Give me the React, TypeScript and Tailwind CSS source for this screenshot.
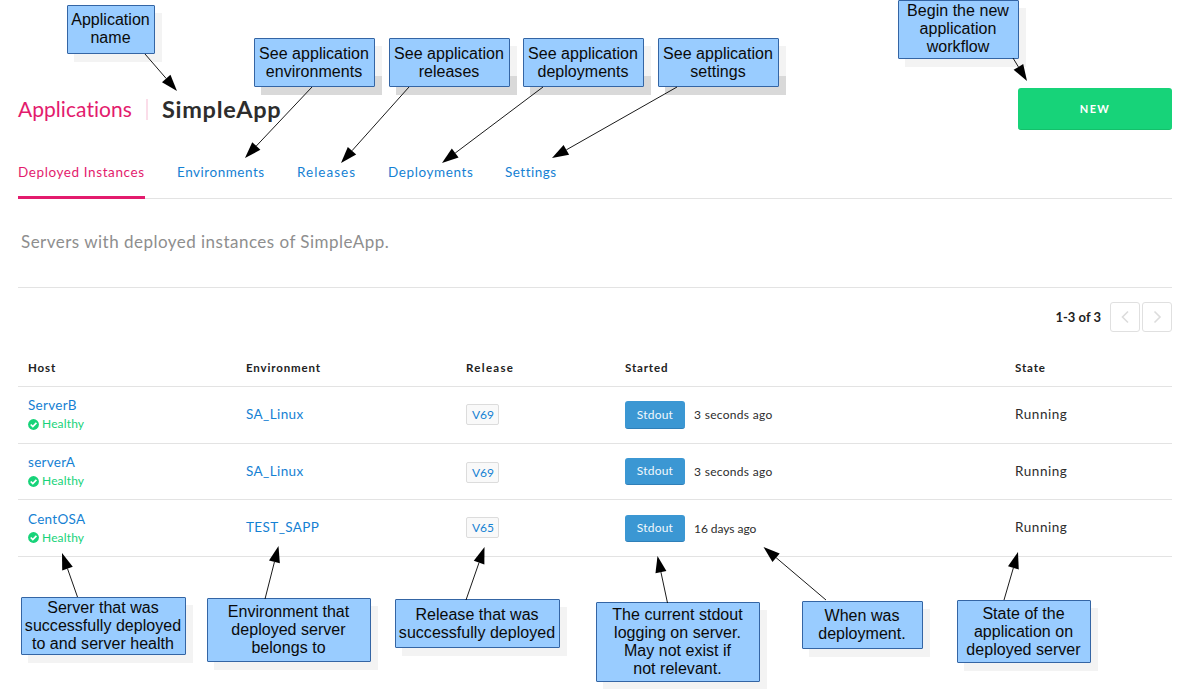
import React from "react";
import clsx from "clsx";

type Note = { box: string; lines: string[]; dark?: boolean };

const notes: Note[] = [
  { box: "left-[67px] top-[5px] w-[88px] h-[49px] [&>p]:pb-[2px]", lines: ["Application", "name"] },
  { box: "left-[254px] top-[38px] w-[121px] h-[49px]", lines: ["See application", "environments"], dark: true },
  { box: "left-[389px] top-[38px] w-[121px] h-[49px]", lines: ["See application", "releases"], dark: true },
  { box: "left-[523px] top-[38px] w-[121px] h-[49px]", lines: ["See application", "deployments"], dark: true },
  { box: "left-[658px] top-[38px] w-[121px] h-[49px]", lines: ["See application", "settings"], dark: true },
  { box: "left-[898px] top-0 w-[121px] h-[59px] [&>p]:pb-[2px]", lines: ["Begin the new", "application", "workflow"] },
  { box: "left-[21px] top-[597px] w-[165px] h-[58px]", lines: ["Server that was", "successfully deployed", "to and server health"] },
  { box: "left-[207px] top-[598px] w-[164px] h-[64px]", lines: ["Environment that", "deployed server", "belongs to"] },
  { box: "left-[395px] top-[599px] w-[165px] h-[49px]", lines: ["Release that was", "successfully deployed"] },
  { box: "left-[596px] top-[602px] w-[164px] h-[80px]", lines: ["The current stdout", "logging on server.", "May not exist if", "not relevant."] },
  { box: "left-[802px] top-[601px] w-[121px] h-[48px]", lines: ["When was", "deployment."] },
  { box: "left-[957px] top-[600px] w-[134px] h-[63px]", lines: ["State of the", "application on", "deployed server"] },
];

const arrows: [number, number, number, number][] = [
  [145, 54, 177, 91],
  [312, 87, 245, 158],
  [409, 87, 341, 163],
  [543, 87, 442, 163],
  [677, 87, 552, 158],
  [1013, 58, 1027, 81],
  [77.5, 597, 62, 553],
  [265, 599, 278.5, 546],
  [466, 600, 484.5, 547],
  [667.5, 603, 657.5, 556],
  [826, 600, 763.5, 547],
  [1004, 600, 1018, 552],
];

function Arrow({ points: [x1, y1, x2, y2] }: { points: [number, number, number, number] }) {
  const len = Math.hypot(x2 - x1, y2 - y1);
  const ux = (x2 - x1) / len;
  const uy = (y2 - y1) / len;
  const bx = x2 - ux * 16.5;
  const by = y2 - uy * 16.5;
  const w = 5.6;
  return (
    <g>
      <line x1={x1} y1={y1} x2={bx} y2={by} stroke="#000" strokeWidth="0.9" />
      <polygon points={`${x2},${y2} ${bx - uy * w},${by + ux * w} ${bx + uy * w},${by - ux * w}`} />
    </g>
  );
}

function Annotations() {
  return (
    <div className="pointer-events-none absolute inset-0">
      {notes.map((n, i) => (
        <div key={i} className={clsx("absolute", n.box)}>
          <div
            className={clsx(
              "absolute top-2 left-[7px] h-full w-full",
              n.dark ? "bg-[linear-gradient(#f3f3f3_30px,#d9d9d9_30px)]" : "bg-[#f3f3f3]",
            )}
          />
          <p className="relative flex h-full w-full flex-col items-center justify-center rounded-[1px] border border-[#3465a4] bg-[#99ccff] pr-[1px] font-['Liberation_Sans',Arial,sans-serif] text-[16px] leading-[18px] tracking-[0.03px] whitespace-nowrap text-[#0a0a0a]">
            {n.lines.map((l) => (
              <span key={l}>{l}</span>
            ))}
          </p>
        </div>
      ))}
      <svg className="absolute inset-0" width="1187" height="689" viewBox="0 0 1187 689">
        {arrows.map((a, i) => (
          <Arrow key={i} points={a} />
        ))}
      </svg>
    </div>
  );
}

const rows = [
  { host: "ServerB", env: "SA_Linux", rel: "V69", started: "3 seconds ago", h: "h-[57px]", hostPad: "pb-px", cell: "pb-[2px]", badge: "pb-px", btn: "h-[28px]", ago: "tracking-[0.3px]" },
  { host: "serverA", env: "SA_Linux", rel: "V69", started: "3 seconds ago", h: "h-[56px]", hostPad: "", cell: "", badge: "pt-px", btn: "h-[27px]", ago: "tracking-[0.3px]" },
  { host: "CentOSA", env: "TEST_SAPP", rel: "V65", started: "16 days ago", h: "h-[57px]", hostPad: "", cell: "pb-[2px]", badge: "pb-px", btn: "mt-px h-[27px]", ago: "pt-[2px] tracking-[-0.05px]" },
];

const cols = "grid grid-cols-[218px_220px_159px_390px_1fr] pl-[10px] border-b border-[#e3e3e3]";

function Chevron({ d }: { d: string }) {
  return (
    <button className="flex h-[30px] w-[30px] items-center justify-center rounded-[3px] border border-[#e0e0e0]">
      <svg width="10" height="14" viewBox="0 0 10 14" fill="none" stroke="#dcdcdc" strokeWidth="1.6">
        <path d={d} />
      </svg>
    </button>
  );
}

export default function App() {
  return (
    <div className="relative h-[689px] w-[1187px] overflow-hidden bg-white pr-[15px] pl-[18px] font-['Lato',sans-serif] text-[#2d2d2d]">
      <header className="flex h-[130px] items-end justify-between">
        <div className="flex h-[42px] items-center whitespace-nowrap">
          <a className="w-[128px] pb-px text-[21px] leading-[41px] tracking-[0.05px] text-[#e31b6d]">Applications</a>
          <span className="h-[21px] w-[2px] bg-[#fbdde9]" />
          <h1 className="pt-px pl-[14px] text-[23.5px] font-bold tracking-[0.7px]">SimpleApp</h1>
        </div>
        <button className="h-[42px] w-[154px] rounded-[3px] border-b border-[#14c06b] bg-[#17d379] pt-[2px] text-[11px] font-bold tracking-[1.3px] text-white">
          NEW
        </button>
      </header>

      <nav className="flex h-[69px] items-end border-b border-[#e3e3e3] text-[13.5px] leading-[18px] tracking-[0.6px] whitespace-nowrap text-[#1581d3]">
        <a className="-mb-px mr-8 h-[36px] w-[127px] border-b-[3px] border-[#e31b6d] text-[#e31b6d]">Deployed Instances</a>
        <a className="h-[35px] w-[120px] tracking-[0.53px]">Environments</a>
        <a className="h-[35px] w-[91px] tracking-[1px]">Releases</a>
        <a className="h-[35px] w-[117px]">Deployments</a>
        <a className="h-[35px] tracking-[0.5px]">Settings</a>
      </nav>

      <section className="flex h-[89px] items-center border-b border-[#e3e3e3] pb-[2px] pl-[3px] text-[17px] text-[#8e8e8e]">
        <p className="tracking-[0.48px]">Servers with deployed instances of SimpleApp.</p>
      </section>

      <div className="flex h-[59px] items-center justify-end gap-[2px] pb-px">
        <span className="mr-[7px] pt-px text-[13px] font-bold text-[#222]">1-3 of 3</span>
        <Chevron d="M8 1.5L2.5 7L8 12.5" />
        <Chevron d="M2.5 1.5L8 7L2.5 12.5" />
      </div>

      <div className={clsx(cols, "h-[40px] items-center pt-[3px] text-[11.5px] font-bold tracking-[0.85px] text-[#222]")}>
        <span>Host</span>
        <span>Environment</span>
        <span className="tracking-[1.3px]">Release</span>
        <span>Started</span>
        <span>State</span>
      </div>
      {rows.map((r) => (
        <div key={r.host} className={clsx(cols, r.h, "items-center text-[13.5px]")}>
          <div className={clsx("flex flex-col", r.hostPad)}>
            <a className="leading-[19px] tracking-[0.3px] text-[#1581d3]">{r.host}</a>
            <span className="flex items-center gap-[3px] text-[12px] leading-[18px] tracking-[0.15px] text-[#17d379]">
              <svg width="11" height="11" viewBox="0 0 11 11">
                <circle cx="5.5" cy="5.5" r="5.4" fill="#17d379" />
                <path d="M2.7 5.5L4.8 7.6L8.4 3.8" fill="none" stroke="#fff" strokeWidth="1.7" />
              </svg>
              Healthy
            </span>
          </div>
          <a className={clsx("tracking-[0.4px] text-[#1581d3]", r.cell)}>{r.env}</a>
          <div className={clsx("flex", r.badge)}>
            <a className="rounded-[2px] border border-[#dcdcdc] bg-[#f9f9f9] pr-[4px] pl-[5px] text-[12px] leading-[19px] text-[#1581d3]">{r.rel}</a>
          </div>
          <div className="flex items-center">
            <button className={clsx("mr-[9px] w-[60px] rounded-[3px] border-b border-[#2f7fb8] bg-[#3b97d3] text-[12px] leading-[24px] tracking-[0.2px] text-[#f1f8fd]", r.btn)}>
              Stdout
            </button>
            <span className={clsx("text-[12px]", r.ago)}>{r.started}</span>
          </div>
          <span className={clsx("tracking-[0.55px]", r.cell)}>Running</span>
        </div>
      ))}

      <Annotations />
    </div>
  );
}
